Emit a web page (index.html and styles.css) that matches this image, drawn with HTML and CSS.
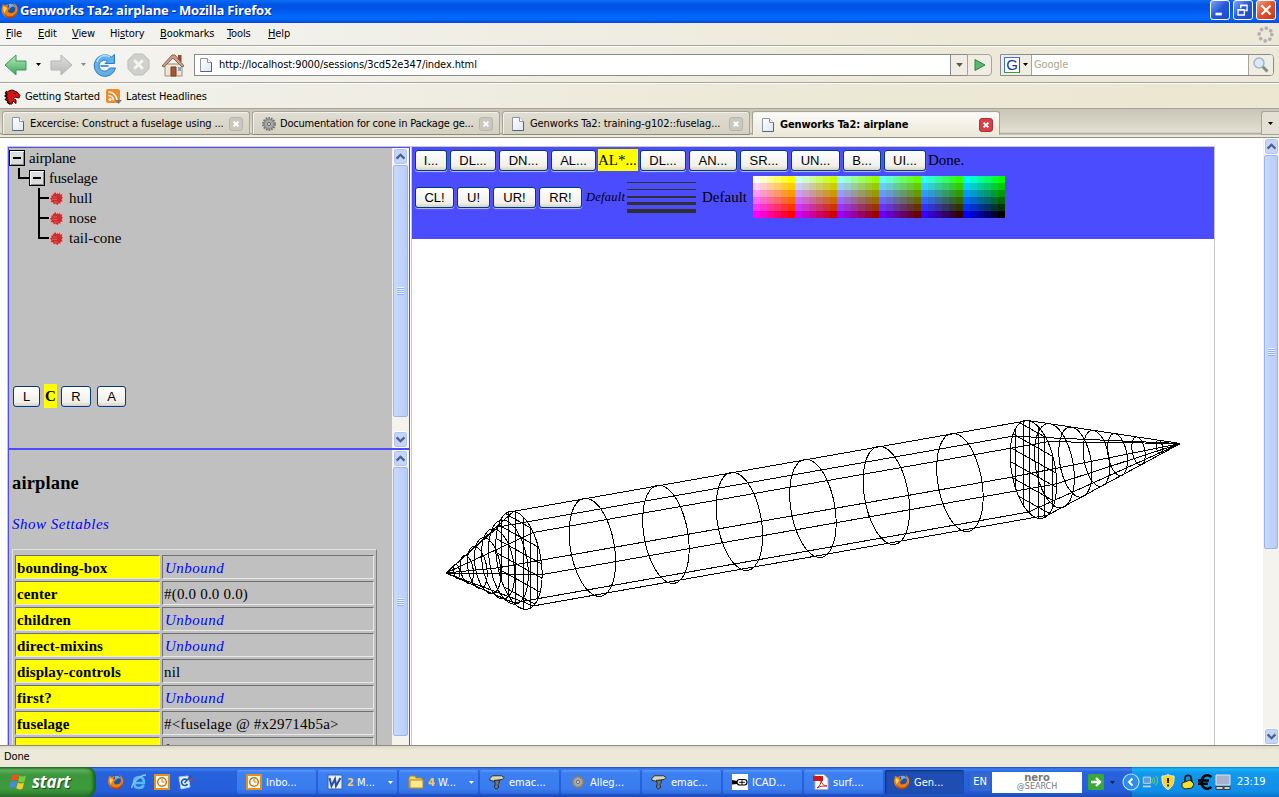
FILE: index.html
```html
<!DOCTYPE html>
<html lang="en">
<head>
<meta charset="utf-8">
<title>Genworks Ta2: airplane</title>
<link rel="stylesheet" href="styles.css">
</head>
<body>
<svg class="defs" width="0" height="0">
  <defs>
    <linearGradient id="gGreen" x1="0" y1="0" x2="0" y2="1"><stop offset="0" stop-color="#b8eab8"/><stop offset="1" stop-color="#3da860"/></linearGradient>
    <linearGradient id="gGrey" x1="0" y1="0" x2="0" y2="1"><stop offset="0" stop-color="#dedede"/><stop offset="1" stop-color="#b9b9b9"/></linearGradient>
    <linearGradient id="gPage" x1="0" y1="0" x2="1" y2="1"><stop offset="0" stop-color="#fff"/><stop offset="1" stop-color="#dfe6ee"/></linearGradient>
  </defs>
  <symbol id="firefox" viewBox="0 0 16 16"><circle cx="8.4" cy="7.6" r="6.6" fill="#24519c"/><path d="M7 2c3-1 6 1 6 4-1-2-3-2-4-1 0 1-2 1-2 0z" fill="#6ab2e8"/><path d="M1 2c1 0 2 1 3 1 1-1 2-1 3-1-1 1-2 2-1 3l2 1c0 1-2 1-2 2 0 2 2 3 4 2 2 0 3-2 3-4 0-2-1-4-2-5 3 1 5 4 4 8-1 4-4 6-7 6-4 0-8-3-8-8 0-2 1-3 1-5z" fill="#e8801a"/><path d="M1.500 9c1 3 4 5 7 4.500 3 0 5-2 5.500-5 1 4-2 7-6 7-3 0-6-3-6.500-6.500z" fill="#b8400c"/><path d="M2 4l2 1 1 1-1 2c-1 1-1 2-1 3-1-2-2-5-1-7z" fill="#ffd05a"/></symbol>
  <symbol id="page" viewBox="0 0 12 14"><path d="M.5 .5h7l4 4v9H.5z" fill="url(#gPage)" stroke="#8a96a8"/><path d="M7.500 .5v4h4" fill="#fff" stroke="#8a96a8"/><path d="M11.500 4.500v9H.5" fill="none" stroke="#4d6380"/></symbol>
  <symbol id="gear" viewBox="0 0 16 16"><circle cx="8" cy="8" r="5.800" fill="#999" stroke="#777" stroke-width="2.400" stroke-dasharray="1.500 1.100"/><circle cx="8" cy="8" r="4.500" fill="#aaa" stroke="#888" stroke-width=".8"/><circle cx="8" cy="8" r="1.600" fill="#ddd" stroke="#666"/></symbol>
  <symbol id="close" viewBox="0 0 14 14"><path d="M4.200 4.200l5.600 5.600M9.800 4.200l-5.600 5.600" stroke="#fff" stroke-width="2.200"/></symbol>
  <symbol id="outlook" viewBox="0 0 16 16"><path d="M1 1h14v14H1z" fill="#fff8e4" stroke="#e09020" stroke-width="2"/><circle cx="8" cy="8" r="4.300" fill="#fff" stroke="#c87818" stroke-width="1.500"/><path d="M8 5v3h2.500" fill="none" stroke="#c87818"/></symbol>
  <symbol id="emacs" viewBox="0 0 18 18"><path d="M1 5l3-3h10l3 2-2 2-10 2-4-1z" fill="#d8d8b8" stroke="#222"/><path d="M6 7h6l-1 4-1 1 1 3-3 2-2-2 1-4z" fill="#777" stroke="#222"/></symbol>
  <symbol id="up" viewBox="0 0 15 15"><path d="M3 10l4.500-4.500L12 10" fill="none" stroke="#4d6185" stroke-width="2.600"/></symbol>
  <symbol id="down" viewBox="0 0 15 15"><path d="M3 5l4.500 4.500L12 5" fill="none" stroke="#4d6185" stroke-width="2.600"/></symbol>
  <symbol id="splat" viewBox="0 0 15 16"><path d="M3.500 3L5 3.500 6 .8l1.500 3L8.500 2l.8 1.800L11 1.300l.2 2.900 2.800-.4-1 2.700 1.500 1L13 9l1.200 2.800-2.400.2v2.500l-2-1L8.500 15.500l-2-1.500-2.500 1 .2-2L1 12l1.200-1.500L.5 8.500l1.700-1L1.500 5l2 .3z" fill="#c83030" stroke="#f4c4c4" stroke-width=".6"/><path d="M4 7h4M3 9.500h5M5 12h4" stroke="#e05858"/></symbol>
  <symbol id="caret" viewBox="0 0 5 3"><path d="M0 0h5L2.500 3z" fill="currentColor"/></symbol>
</svg>

<header class="titlebar">
  <svg class="i16" ><use href="#firefox"/></svg>
  <h1 class="title">Genworks Ta2: airplane - Mozilla Firefox</h1>
  <div class="winbtns">
    <span class="wb"><svg viewBox="0 0 20 20"><path d="M5 13h7v3H5z" fill="#fff"/></svg></span>
    <span class="wb"><svg viewBox="0 0 20 20"><path d="M7.500 8V4.500h7v6h-2M7 5h8M4.500 9.500h7v6h-7zM4 10h8" fill="none" stroke="#fff" stroke-width="1.500"/></svg></span>
    <span class="wb red"><svg viewBox="0 0 20 20"><path d="M5 5l10 10M15 5L5 15" stroke="#fff" stroke-width="2.400"/></svg></span>
  </div>
</header>

<nav class="menubar">
  <span class="m1"><u>F</u>ile</span><span class="m2"><u>E</u>dit</span><span class="m3"><u>V</u>iew</span><span class="m4">Hi<u>s</u>tory</span><span class="m5"><u>B</u>ookmarks</span><span class="m6"><u>T</u>ools</span><span class="m7"><u>H</u>elp</span>
  <svg class="throbber" viewBox="0 0 16 16"><circle cx="8" cy="8" r="6" fill="none" stroke="#b0b0b0" stroke-width="3.400" stroke-linecap="round" stroke-dasharray="0.100 4.612"/></svg>
</nav>

<div class="navbar">
  <svg class="back" viewBox="0 0 24 22"><path d="M1 11L12 1v6h10v9H12v5z" fill="url(#gGreen)" stroke="#3c9a55"/></svg>
  <svg class="car c1"><use href="#caret"/></svg>
  <svg class="fwd" viewBox="0 0 24 22"><path d="M23 11L12 1v6H2v9h10v5z" fill="url(#gGrey)" stroke="#b4b4b4"/></svg>
  <svg class="car c2"><use href="#caret"/></svg>
  <svg class="reload" viewBox="0 0 24 24"><path d="M21.500 8V1.500L18.500 4A10.800 10.800 0 1 0 22.500 15h-6A5.500 5.500 0 1 1 14.500 8L12 10.500h9.500z" fill="#62b0ea" stroke="#2f7cc4"/><path d="M4 9a9 9 0 0 1 8-6.500c2 0 3.500.4 5 1.500" fill="none" stroke="#b4dcf8" stroke-width="1.500"/><path d="M7.500 13h8" stroke="#4c98d8" stroke-width="2"/></svg>
  <svg class="stop" viewBox="0 0 24 24"><path d="M7.500 1h9L23 7.500v9L16.500 23h-9L1 16.500v-9z" fill="#cfcfcb" stroke="#bcbcb8"/><path d="M7.500 7.500l9 9M16.500 7.500l-9 9" stroke="#f4f4f0" stroke-width="3"/></svg>
  <svg class="home" viewBox="0 0 24 24"><path d="M17 2h3.500v7H17z" fill="#a04030"/><path d="M4 11h17v12H4z" fill="#efe4d4" stroke="#a08c78"/><path d="M1 13L11 2h3l9 11-2 1-9-9-9 9z" fill="#c8a088" stroke="#8a6450"/><path d="M10 14h5v9h-5z" fill="#a85838" stroke="#704028"/><path d="M17 14h3v4h-3z" fill="#8aa8c0"/></svg>
  <div class="url"><svg class="pg"><use href="#page"/></svg><span class="urltext">http://localhost:9000/sessions/3cd52e347/index.html</span><span class="drop"><svg class="car7"><use href="#caret"/></svg></span></div>
  <div class="go"><svg viewBox="0 0 12 14"><path d="M1 1.500l10 5.500L1 12.500z" fill="#5cba70" stroke="#2c8040"/></svg></div>
  <div class="search"><span class="eng"><b class="glogo">G</b><svg class="car"><use href="#caret"/></svg></span><span class="q">Google</span><span class="mag"><svg viewBox="0 0 18 18"><path d="M9.500 9.500l6 6" stroke="#888" stroke-width="3"/><circle cx="7" cy="7" r="5" fill="#d4ecf8" stroke="#a8b4bc" stroke-width="1.500"/></svg></span></div>
</div>

<div class="bookmarks">
  <svg class="dino" viewBox="0 0 17 16"><path d="M2 5l2.500-3 3.500-1 5 2 3 3.500-1 2.500-4-1-1.500 1.500L12 11v3.500L9 12l-1 3H5l-2-4z" fill="#d81414" stroke="#400"/><path d="M3 2L1.500 4 3 5.500 1 7l2 1.500L1.500 10.500 4 12l-.5 1.500L6 15" fill="none" stroke="#200" stroke-width="1.300"/><path d="M9 4.500h2.500" stroke="#000"/></svg>
  <span class="b1">Getting Started</span>
  <svg class="rss" viewBox="0 0 16 16"><rect width="14" height="14" rx="2" fill="#ee8c2c"/><circle cx="4" cy="10.500" r="1.500" fill="#fff"/><path d="M2.500 6.500a5 5 0 0 1 5 5M2.500 3a8.500 8.500 0 0 1 8.500 8.500" fill="none" stroke="#fff" stroke-width="1.600"/><path d="M9 11h7l-3.500 4z" fill="#777"/></svg>
  <span class="b2">Latest Headlines</span>
</div>

<div class="tabs">
  <div class="tab"><svg class="pg"><use href="#page"/></svg><span class="t1">Excercise: Construct a fuselage using ...</span><svg class="x"><use href="#close"/></svg></div>
  <div class="tab"><svg class="gr"><use href="#gear"/></svg><span class="t2">Documentation for cone in Package ge...</span><svg class="x"><use href="#close"/></svg></div>
  <div class="tab"><svg class="pg"><use href="#page"/></svg><span class="t3">Genworks Ta2: training-g102::fuselag...</span><svg class="x"><use href="#close"/></svg></div>
  <div class="tab on"><svg class="pg"><use href="#page"/></svg><span class="t4">Genworks Ta2: airplane</span><svg class="x"><use href="#close"/></svg></div>
  <div class="all"><svg class="car"><use href="#caret"/></svg></div>
</div>

<main class="page">
  <section class="left">
    <div class="pane top">
      <div class="body">
        <ul class="tree">
          <li><span class="box"></span>airplane</li>
          <li class="l2"><i class="elbow"></i><span class="box"></span>fuselage</li>
          <li class="l3"><i class="tee"></i><svg class="sp"><use href="#splat"/></svg>hull</li>
          <li class="l3"><i class="tee"></i><svg class="sp"><use href="#splat"/></svg>nose</li>
          <li class="l3 last"><i class="tee"></i><svg class="sp"><use href="#splat"/></svg>tail-cone</li>
        </ul>
        <div class="modes"><span class="btn w28">L</span><b class="c">C</b><span class="btn w30">R</span><span class="btn w29 ml">A</span></div>
      </div>
      <div class="sb"><svg><use href="#up"/></svg><div class="thumb th1"><i></i></div><svg class="end"><use href="#down"/></svg></div>
    </div>
    <div class="pane bottom">
      <div class="body">
        <h3>airplane</h3>
        <p class="link">Show Settables</p>
        <div class="grid">
          <b>bounding-box</b><em>Unbound</em>
          <b>center</b><span>#(0.0 0.0 0.0)</span>
          <b>children</b><em>Unbound</em>
          <b>direct-mixins</b><em>Unbound</em>
          <b>display-controls</b><span>nil</span>
          <b>first?</b><em>Unbound</em>
          <b>fuselage</b><span>#&lt;fuselage @ #x29714b5a&gt;</span>
          <b>fuselage-diameter</b><span>f</span>
        </div>
      </div>
      <div class="sb"><svg><use href="#up"/></svg><div class="thumb th2"><i></i></div></div>
    </div>
  </section>
  <section class="right">
    <div class="tools">
      <div class="row"><span class="btn w32">I...</span><span class="btn w46">DL...</span><span class="btn w49">DN...</span><span class="btn w45">AL...</span><span class="al">AL*...</span><span class="btn w46">DL...</span><span class="btn w48">AN...</span><span class="btn w48">SR...</span><span class="btn w49">UN...</span><span class="btn w38">B...</span><span class="btn w42">UI...</span><span class="done">Done.</span></div>
      <div class="row two"><span class="btn w39">CL!</span><span class="btn w33">U!</span><span class="btn w43">UR!</span><span class="btn w43">RR!</span><em class="def">Default</em><div class="lines"><i class="h1"></i><i class="h1"></i><i class="h2"></i><i class="h3"></i><i class="h4"></i></div><span class="def2">Default</span><div class="palette" id="palette"></div></div>
    </div>
    <svg id="wire" class="wire" viewBox="412 239 802 506"></svg>
  </section>
  <div class="sb main"><svg><use href="#up"/></svg><div class="thumb th3"><i></i></div><svg class="end"><use href="#down"/></svg></div>
</main>

<div class="status"><span>Done</span></div>

<footer class="taskbar">
  <div class="start"><svg viewBox="0 0 20 20"><path d="M4 3c2-1.500 4-1.500 6 0L8.500 9c-2-1.300-4-1.300-6 0z" fill="#f05028"/><path d="M11 3.500c2 1.300 4 1.300 6.500 0L16 9.500c-2.500 1.300-4.500 1-6.500-.2z" fill="#80c838"/><path d="M2.300 10c2-1.300 4-1.300 6 0L6.800 16c-2-1.300-4-1.300-6 0z" fill="#4888e8"/><path d="M9.300 10.500c2 1.300 4 1.300 6.300.1l-1.500 6c-2.300 1.300-4.300 1-6.300-.3z" fill="#f8c830"/></svg><em>start</em></div>
  <div class="quick">
    <svg><use href="#firefox"/></svg>
    <svg viewBox="0 0 16 16"><path d="M3 9h10c0-4-2-6-5-6S3 5 3 8.500 5 14 8 14c2 0 4-1 4.700-3" fill="none" stroke="#58b8f8" stroke-width="2.500"/><path d="M1 14c-1-4 8-13 14-13" fill="none" stroke="#88ccf8" stroke-width="1.300"/></svg>
    <svg><use href="#outlook"/></svg>
    <svg viewBox="0 0 16 16"><path d="M2 3l9-1 2 11-9 2z" fill="#e4f0fc" stroke="#a8ccf4"/><path d="M10 6a3.200 3.200 0 1 0 .5 4M7.500 9L14 2" fill="none" stroke="#1858a8" stroke-width="1.600"/><path d="M12.500 5l3 1" stroke="#d83020" stroke-width="2"/></svg>
  </div>
  <div class="tasks">
    <div class="task"><svg><use href="#outlook"/></svg><span>Inbo...</span></div>
    <div class="task"><svg viewBox="0 0 16 16"><path d="M1 1h14v14H1z" fill="#e8f0fc" stroke="#3860a8"/><path d="M2.500 4l2 8L8 5l1 7 4.500-8" fill="none" stroke="#2850a0" stroke-width="2"/></svg><span><b>2</b> M...</span><svg class="car"><use href="#caret"/></svg></div>
    <div class="task"><svg viewBox="0 0 16 16"><path d="M1 4l1-2h5l1 2h6v10H1z" fill="#f8d860" stroke="#b88818"/><path d="M2 6h13v8H2z" fill="#fce890" stroke="#b88818"/></svg><span><b>4</b> W...</span><svg class="car"><use href="#caret"/></svg></div>
    <div class="task"><svg><use href="#emacs"/></svg><span>emac...</span></div>
    <div class="task"><svg><use href="#gear"/></svg><span>Alleg...</span></div>
    <div class="task"><svg><use href="#emacs"/></svg><span>emac...</span></div>
    <div class="task"><svg viewBox="0 0 16 16"><path d="M0 0h16v16H0z" fill="#fff"/><rect x="5" y="5.500" width="10" height="5.500" rx="2.700" fill="none" stroke="#000" stroke-width="1.200"/><path d="M0 6l5 1v3l-5 .5z" fill="#000"/><path d="M7 8.300h6M10 6v5" stroke="#000" stroke-width=".9"/></svg><span>ICAD...</span></div>
    <div class="task"><svg viewBox="0 0 16 16"><path d="M2 .5h9l4 4v11H2z" fill="#fff" stroke="#aaa"/><path d="M0 2h10v5H0z" fill="#d01818"/><path d="M4 14c3-2 4-5 4-7 1 3 3 5 6 5-4 0-7 0-10 2z" fill="none" stroke="#d02020"/></svg><span>surf....</span></div>
    <div class="task cur"><svg><use href="#firefox"/></svg><span>Gen...</span></div>
  </div>
  <span class="lang">EN</span>
  <div class="nero"><b>nero</b><span>@SEARCH</span></div>
  <svg class="arrow" viewBox="0 0 16 16"><rect width="16" height="16" rx="1.500" fill="#38a838"/><path d="M3 8h8M8 4l4 4-4 4" fill="none" stroke="#fff" stroke-width="2.400"/></svg>
  <svg class="car dk"><use href="#caret"/></svg>
  <div class="tray">
    <svg class="chev" viewBox="0 0 18 18"><circle cx="9" cy="9" r="8" fill="#2c8cf0" stroke="#b8e0fc" stroke-width="1.200"/><path d="M10.500 5.500L7 9l3.500 3.500" fill="none" stroke="#fff" stroke-width="2"/></svg>
    <svg viewBox="0 0 18 16"><path d="M1.500 2.500h8v7h-8z" fill="#58a0e0" stroke="#d0dce8"/><path d="M1 12h9v2H1z" fill="#c8d0d8"/><path d="M11 4q2 2 0 5M13 2.500q3 4 0 8M15.500 1q4 5 0 11" fill="none" stroke="#70e060"/></svg>
    <svg class="shield" viewBox="0 0 16 16"><path d="M8 .5c2 1.500 4 1.500 6 1.500.5 6-1 11-6 13.500C3 13 1.500 8 2 2c2 0 4 0 6-1.500z" fill="#ffd428" stroke="#e8ecf0"/><path d="M8 4v5M8 10.500v2" stroke="#222" stroke-width="2"/></svg>
    <svg class="lock" viewBox="0 0 16 16"><path d="M5 8V4c1-4 6-3 6 0l1 4" fill="none" stroke="#222" stroke-width="1.800"/><path d="M2 9l8-3 4 4-2 4-7 1-3-2z" fill="#f4e030" stroke="#222"/></svg>
    <svg class="euro" viewBox="0 0 16 16"><path d="M14.500 3C9-1 4.500 3 4.500 8s4.500 9 10 5M1 6.500h11M1 9.800h10" fill="none" stroke="#000" stroke-width="2.400"/></svg>
    <svg viewBox="0 0 16 16"><path d="M1 1h14v10H1z" fill="#a8b0d0" stroke="#e4e4e4"/><path d="M1 12.500h7v3H1zM9 12.500h6v3H9z" fill="#ccc" stroke="#222" stroke-width=".8"/></svg>
    <span>23:19</span>
  </div>
</footer>
<script src="script.js"></script>
</body>
</html>
```
FILE: styles.css
```css
* { box-sizing: border-box; }
body { margin: 0; width: 1279px; height: 797px; overflow: hidden; background: #fff; display: flex; flex-direction: column; font: 11px/14px "DejaVu Sans Condensed", "DejaVu Sans", sans-serif; letter-spacing: -.11px; color: #000; white-space: nowrap; }
body > * { flex: none; }
.defs { position: absolute; }
svg { flex: none; display: block; }
.i16 { width: 18px; height: 17px; }
.car { width: 5px; height: 3px; }

.titlebar { height: 23px; display: flex; align-items: center; padding: 0 3px 3px 1px; background: linear-gradient(#0a6cf6 0, #0054e3 5px, #0055e8 9px, #0268fd 16px, #0268fd 19px, #0048d8 23px); }
.title { margin: 0 0 0 1px; font: bold 13px/18px "Open Sans", sans-serif; letter-spacing: -.18px; color: #fff; text-shadow: 1px 1px #0c2c8c; }
.winbtns { margin-left: auto; display: flex; gap: 3px; }
.wb { width: 20px; height: 20px; border: 1px solid #fff; border-radius: 3px; background: linear-gradient(135deg, #7da4f4, #2458dc 50%, #1c48cc); }
.wb.red { background: linear-gradient(135deg, #f0a088, #e0502c 50%, #cc3810); }
.wb svg { width: 18px; height: 18px; }

.menubar { height: 23px; display: flex; align-items: center; background: linear-gradient(90deg, #f4f4f2, #ece9d8 75%); border-bottom: 1px solid #a6a498; }
.menubar > span { flex: none; }
.menubar u { text-underline-offset: 1px; }
.m1 { width: 32px; margin-left: 6px; }
.m2 { width: 34px; }
.m3 { width: 38px; }
.m4 { width: 50px; }
.m5 { width: 67px; }
.m6 { width: 41px; }
.throbber { width: 17px; height: 17px; margin: 0 5px 0 auto; }

.navbar { height: 37px; display: flex; align-items: center; border-top: 1px solid #fff; border-bottom: 1px solid #a6a498; background: linear-gradient(90deg, #f4f4f2, #ece9d8 75%); padding: 0 5px 0 4px; }
.back { width: 24px; height: 22px; }
.c1 { margin: 0 8px 0 8px; }
.fwd { width: 24px; height: 22px; }
.c2 { margin: 0 7px 0 8px; color: #888; }
.reload { width: 24px; height: 24px; }
.stop { width: 23px; height: 23px; margin-left: 10px; }
.home { width: 24px; height: 24px; margin: 0 9px 0 11px; }
.url { width: 774px; height: 22px; border: 1px solid #8a8a88; background: #fff; display: flex; align-items: center; }
.pg { width: 12px; height: 14px; margin-left: 5px; }
.urltext { margin-left: 7px; padding-top: 1px; }
.drop { margin-left: auto; width: 17px; height: 20px; border-left: 1px solid #8a8a88; background: #f0eee4; display: flex; align-items: center; justify-content: center; color: #555; }
.car7 { width: 7px; height: 4px; }
.go { width: 25px; height: 22px; margin-left: -1px; border: 1px solid #a6a498; border-radius: 0 4px 4px 0; background: #f0eee4; display: flex; align-items: center; justify-content: center; }
.go svg { width: 12px; height: 14px; }
.search { margin-left: auto; width: 274px; height: 22px; border: 1px solid #8a8a88; border-radius: 0 4px 4px 0; background: #fff; display: flex; align-items: center; overflow: hidden; }
.eng { width: 31px; height: 20px; border-right: 1px solid #a6a498; background: #f0eee4; display: flex; align-items: center; gap: 3px; padding-left: 3px; }
.glogo { width: 16px; height: 16px; border: 1px solid #3a9c3a; border-top-color: #3874e0; border-left-color: #3874e0; border-right-color: #c82020; background: #fff; color: #1830a0; font: 15px/14px "Liberation Sans", sans-serif; text-align: center; }
.q { margin-left: 2px; padding-top: 1px; color: #aaa694; }
.mag { margin-left: auto; width: 25px; height: 20px; border-left: 1px solid #a6a498; background: #f0eee4; display: flex; align-items: center; justify-content: center; }
.mag svg { width: 18px; height: 18px; }

.bookmarks { height: 26px; border-top: 1px solid #fff; border-bottom: 1px solid #a6a498; display: flex; align-items: center; background: linear-gradient(90deg, #f2f2ee, #ece9d8 60%, #ebe7d2); padding: 2px 0 0 4px; }
.dino { width: 17px; height: 16px; }
.b1 { width: 76px; margin-left: 4px; }
.rss { width: 16px; height: 16px; margin-left: 5px; }
.b2 { margin-left: 4px; }

.tabs { height: 29px; flex: none; display: flex; gap: 2px; padding: 2px 0 0 2px; background: linear-gradient(#c8c5b8, #e2dfd0 23px, #a0a098 25px, #ece9d8 26px, #ece9d8 28px, #908f86 28px); }
.tab { width: 248px; height: 24px; flex: none; display: flex; align-items: center; border: 1px solid #a6a498; border-bottom-color: #8c8b82; border-radius: 3px 3px 0 0; background: linear-gradient(#e0ded2, #d4d1c2); box-shadow: inset 1px 1px #f4f2ea; padding-top: 2px; }
.tab span { margin-left: 6px; }
.tab .pg { margin-left: 9px; }
.tab .gr { width: 16px; height: 16px; margin-left: 8px; }
.tab .gr + span { margin-left: 3px; letter-spacing: -.2px; }
.x { width: 14px; height: 14px; margin: 0 6px 0 auto; border: 1px solid #b8b6aa; border-radius: 3px; background: #cac8be; }
.tab.on { background: linear-gradient(#fcfcfa, #ece9d8); border-bottom: 0; font-weight: bold; }
.tab.on .x { background: #d84048; border-color: #a83038; }
.all { width: 18px; height: 24px; margin-left: auto; border: 1px solid #a6a498; border-right: 0; border-radius: 3px 0 0 0; background: #e4e1d4; display: flex; align-items: center; justify-content: center; }

.page { height: 607px; display: flex; padding: 8px 0 0 7px; background: #fff; font: 15px/20px "Liberation Serif", serif; letter-spacing: 0; }
.left { width: 405px; border: solid #c8c8c8; border-width: 1px 1px 0; display: flex; flex-direction: column; }
.pane { display: flex; border-left: 1px solid #4c4cff; border-right: 1px solid #4c4cff; background: #c0c0c0; margin-right: 1px; overflow: hidden; }
.top { height: 301px; border-top: 1px solid #4c4cff; }
.bottom { height: 297px; border-top: 2px solid #4c4cff; }
.body { width: 383px; flex: none; overflow: hidden; }
.tree { list-style: none; margin: 0; padding: 0; }
.tree li { height: 20px; display: flex; align-items: center; position: relative; }
.tree li:not(.l3) { letter-spacing: -.2px; }
.box { width: 16px; height: 16px; border: 1px solid #000; box-shadow: inset 1px 1px #fff, inset -1px -1px #888; background: linear-gradient(#000, #000) center/8px 2px no-repeat, #dcdcdc; margin-right: 4px; flex: none; }
.l2 { padding-left: 20px; }
.elbow { position: absolute; left: 9px; top: 0; width: 11px; height: 11px; border: solid #000; border-width: 0 0 2px 2px; }
.l3 { padding-left: 40px; }
.tee { position: absolute; left: 29px; top: 0; width: 11px; height: 20px; border-left: 2px solid #000; background: linear-gradient(#000, #000) 0 9px/11px 2px no-repeat; }
.last .tee { height: 11px; }
.sp { width: 15px; height: 16px; margin-right: 5px; }
.modes { display: flex; align-items: center; margin: 136px 0 0 4px; height: 24px; }
.c { background: #ff0; height: 24px; width: 13px; line-height: 24px; text-align: center; margin: 0 4px; font-size: 15px; }
.ml { margin-left: 6px; }
.btn { flex: none; height: 21px; border: 1px solid #003c74; border-radius: 3px; background: linear-gradient(#fff, #f0efe8 80%, #d6d0c4); font: 13px/19px "Liberation Sans", sans-serif; text-align: center; box-shadow: 0 1px 1px #bcc4e8; }
.w28 { width: 27px; } .w29 { width: 29px; } .w30 { width: 30px; }
.w32 { width: 32px; } .w33 { width: 33px; } .w38 { width: 38px; } .w39 { width: 39px; } .w42 { width: 42px; } .w43 { width: 43px; } .w45 { width: 45px; } .w46 { width: 46px; } .w48 { width: 48px; } .w49 { width: 49px; }

.sb { width: 17px; flex: none; background: #f4f3ee; display: flex; flex-direction: column; }
.sb > svg { width: 15px; height: 17px; margin: 0 1px; background: #c4d4fc; border: 1px solid #fff; border-radius: 3px; box-shadow: inset 0 0 0 1px #b0c4f4; }
.sb .end { margin-top: auto; }
.thumb { margin: 0 1px; border: 1px solid #9cb4ec; border-radius: 2px; background: linear-gradient(90deg, #cadafe, #b8ccfa); display: flex; align-items: center; justify-content: center; }
.thumb i { width: 7px; height: 8px; background: repeating-linear-gradient(#eef4fe 0 1px, #8cb0f8 1px 2px); }
.th1 { height: 252px; } .th2 { height: 269px; } .th3 { height: 394px; }
.main { margin-left: auto; margin-top: -8px; width: 16px; }

h3 { margin: 22px 0 0 3px; font: bold 18.500px/22px "Liberation Serif", serif; letter-spacing: .15px; }
.link { margin: 20px 0 0 3px; color: #00f; font-style: italic; letter-spacing: .5px; }
.grid { margin: 15px 0 0 3px; width: 365px; border: 1px solid #e4e4e4; border-right-color: #808080; padding: 5px 2px 0; display: grid; grid-template-columns: 145px 212px; grid-auto-rows: 24px; gap: 2px; }
.grid > * { border: 1px solid #707070; border-right-color: #e8e8e8; border-bottom-color: #e8e8e8; padding: 1px 1px 0; line-height: 22px; overflow: hidden; letter-spacing: .2px; }
.grid b { background: #ff0; letter-spacing: .1px; }
.grid em { color: #00f; padding-left: 2px; letter-spacing: .5px; }

.right { width: 803px; display: flex; flex-direction: column; border-top: 1px solid #c8c8c8; border-right: 1px solid #c8c8c8; }
.tools { height: 92px; flex: none; background: #4c4cff; padding: 2px 0 0 3px; }
.row { display: flex; align-items: center; height: 22px; gap: 3px; }
.al { width: 40px; height: 22px; line-height: 22px; background: #ff0; margin: 0 -1px; overflow: hidden; }
.done { margin-left: -1px; }
.two { height: 42px; margin-top: 5px; }
.def { font-size: 12.500px; width: 41px; margin-left: 1px; letter-spacing: .25px; }
.lines { width: 69px; height: 31px; margin-left: -3px; display: flex; flex-direction: column; gap: 4px; }
.lines i { display: block; background: #303030; }
.h1 { height: 1px; margin-bottom: 2px; } .h2 { height: 2px; } .h3 { height: 3px; } .h4 { height: 4px; }
.def2 { width: 48px; margin-left: 3px; }
.palette { display: grid; grid-template-columns: repeat(36, 7px); grid-auto-rows: 7px; }
.wire { width: 802px; height: 506px; fill: none; stroke: #000; stroke-width: 1; shape-rendering: crispEdges; }

.status { height: 22px; border-top: 1px solid #8c8b82; background: linear-gradient(#dcd9c8, #ece9d8 4px); display: flex; align-items: center; padding-left: 4px; }

.taskbar { height: 30px; display: flex; align-items: center; background: linear-gradient(#1c48b4, #3c80f0 2px, #2862dc 5px, #245edb 24px, #1c4cb8); color: #fff; letter-spacing: 0; }
.start { width: 96px; height: 30px; display: flex; align-items: center; gap: 3px; padding-left: 8px; border-radius: 0 9px 9px 0; background: linear-gradient(#2c6c2c, #5cb05c 3px, #3c963c 8px, #3c9c3c 22px, #2c702c); box-shadow: inset -3px 0 3px #1c641c; }
.start svg { width: 21px; height: 20px; }
.start em { font: italic bold 17px/22px "Open Sans", sans-serif; letter-spacing: -.2px; text-shadow: 1px 1px 1px #1a4a1a; }
.quick { display: flex; gap: 7px; margin-left: 12px; width: 129px; }
.quick svg { width: 16px; height: 16px; }
.tasks { display: flex; gap: 2px; }
.task { width: 79px; height: 24px; border-radius: 2px; background: linear-gradient(#5c98fa, #3c80f2 3px, #3a7cee 19px, #2c68dc); display: flex; align-items: center; padding-left: 9px; }
.task > svg:first-child { width: 16px; height: 16px; }
.task span { margin-left: 4px; padding-top: 1px; }
.task b { color: #ffc860; }
.task .car { margin: 0 4px 0 auto; }
.cur { background: #1e4eb4; box-shadow: inset 1px 1px 2px #103078; }
.lang { margin-left: 6px; width: 20px; text-align: center; background: #3468cc; line-height: 18px; }
.nero { margin-left: 2px; width: 90px; height: 21px; background: #fff; color: #777; display: flex; flex-direction: column; align-items: center; font: 8px/8px "DejaVu Sans", sans-serif; }
.nero b { font-size: 10px; line-height: 11px; }
.arrow { width: 16px; height: 16px; margin-left: 6px; }
.dk { color: #102050; margin-left: 6px; }
.tray { margin-left: 17px; flex: 1; height: 30px; background: linear-gradient(#0c78d0, #18b4f8 2px, #1098ec 6px, #108ee8 24px, #0c70c8); display: flex; align-items: center; gap: 2px; }
.tray svg { width: 16px; height: 16px; }
.tray .chev { width: 18px; height: 18px; margin-left: -10px; }
.tray .lock { margin: 0 -1px 0 2px; }
.tray span { margin-left: 4px; }
```
FILE: script.js
```js
// 216-colour web-safe palette: blocks step red, rows step green, columns step blue.
const palette = document.getElementById('palette');
for (let row = 0; row < 6; row++)
  for (let block = 0; block < 6; block++)
    for (let col = 0; col < 6; col++) {
      const cell = document.createElement('i');
      cell.style.background = `rgb(${255 - 51 * block},${255 - 51 * row},${255 - 51 * col})`;
      palette.append(cell);
    }

// Wireframe of the airplane: hull cylinder with a cone at each end.
const left = [518.9, 560.3], right = [1033.4, 469.5];
const noseTip = [446, 573], tailTip = [1180.5, 443.5];
const mix = (a, b, k) => [a[0] + (b[0] - a[0]) * k, a[1] + (b[1] - a[1]) * k];
const rim = (c, t, s = 1) => [c[0] + s * 23.2 * Math.cos(t), c[1] + s * (14.5 * Math.cos(t) + 46.9 * Math.sin(t))];
const pt = p => p.map(v => v.toFixed(1)).join(' ');
const line = (a, b) => `M${pt(a)}L${pt(b)}`;
const ring = (c, s = 1) => {
  const pts = [];
  for (let i = 0; i < 60; i++) pts.push(pt(rim(c, i * Math.PI / 30, s)));
  return `M${pts.join('L')}Z`;
};
let d = '';
for (let i = 0; i < 8; i++) d += ring(mix(left, right, i / 7));
for (let i = 1; i < 7; i++) {
  d += ring(mix(left, noseTip, i / 7), 1 - i / 7);
  d += ring(mix(right, tailTip, i / 7), 1 - i / 7);
}
for (let i = 0; i < 7; i++) {
  const t = (256.9 + i * 360 / 7) * Math.PI / 180;
  d += line(rim(left, t), rim(right, t)) + line(rim(left, t), noseTip) + line(rim(right, t), tailTip);
}
// End caps are hatched and clipped to the rim.
let caps = '';
[left, right].forEach((c, n) => {
  let h = '';
  for (const x of [-17.6, -10.4, -3.6, 4.6, 11.4, 18.7]) h += line([c[0] + x, c[1] - 60], [c[0] + x, c[1] + 60]);
  for (const y of [-39, -24, -9, 5, 20, 35]) h += line([c[0] - 25, c[1] + y - 14], [c[0] + 25, c[1] + y + 14]);
  caps += `<clipPath id="cap${n}"><path d="${ring(c)}"/></clipPath><path clip-path="url(#cap${n})" d="${h}"/>`;
});
document.getElementById('wire').innerHTML = `<path d="${d}"/>${caps}`;
```
